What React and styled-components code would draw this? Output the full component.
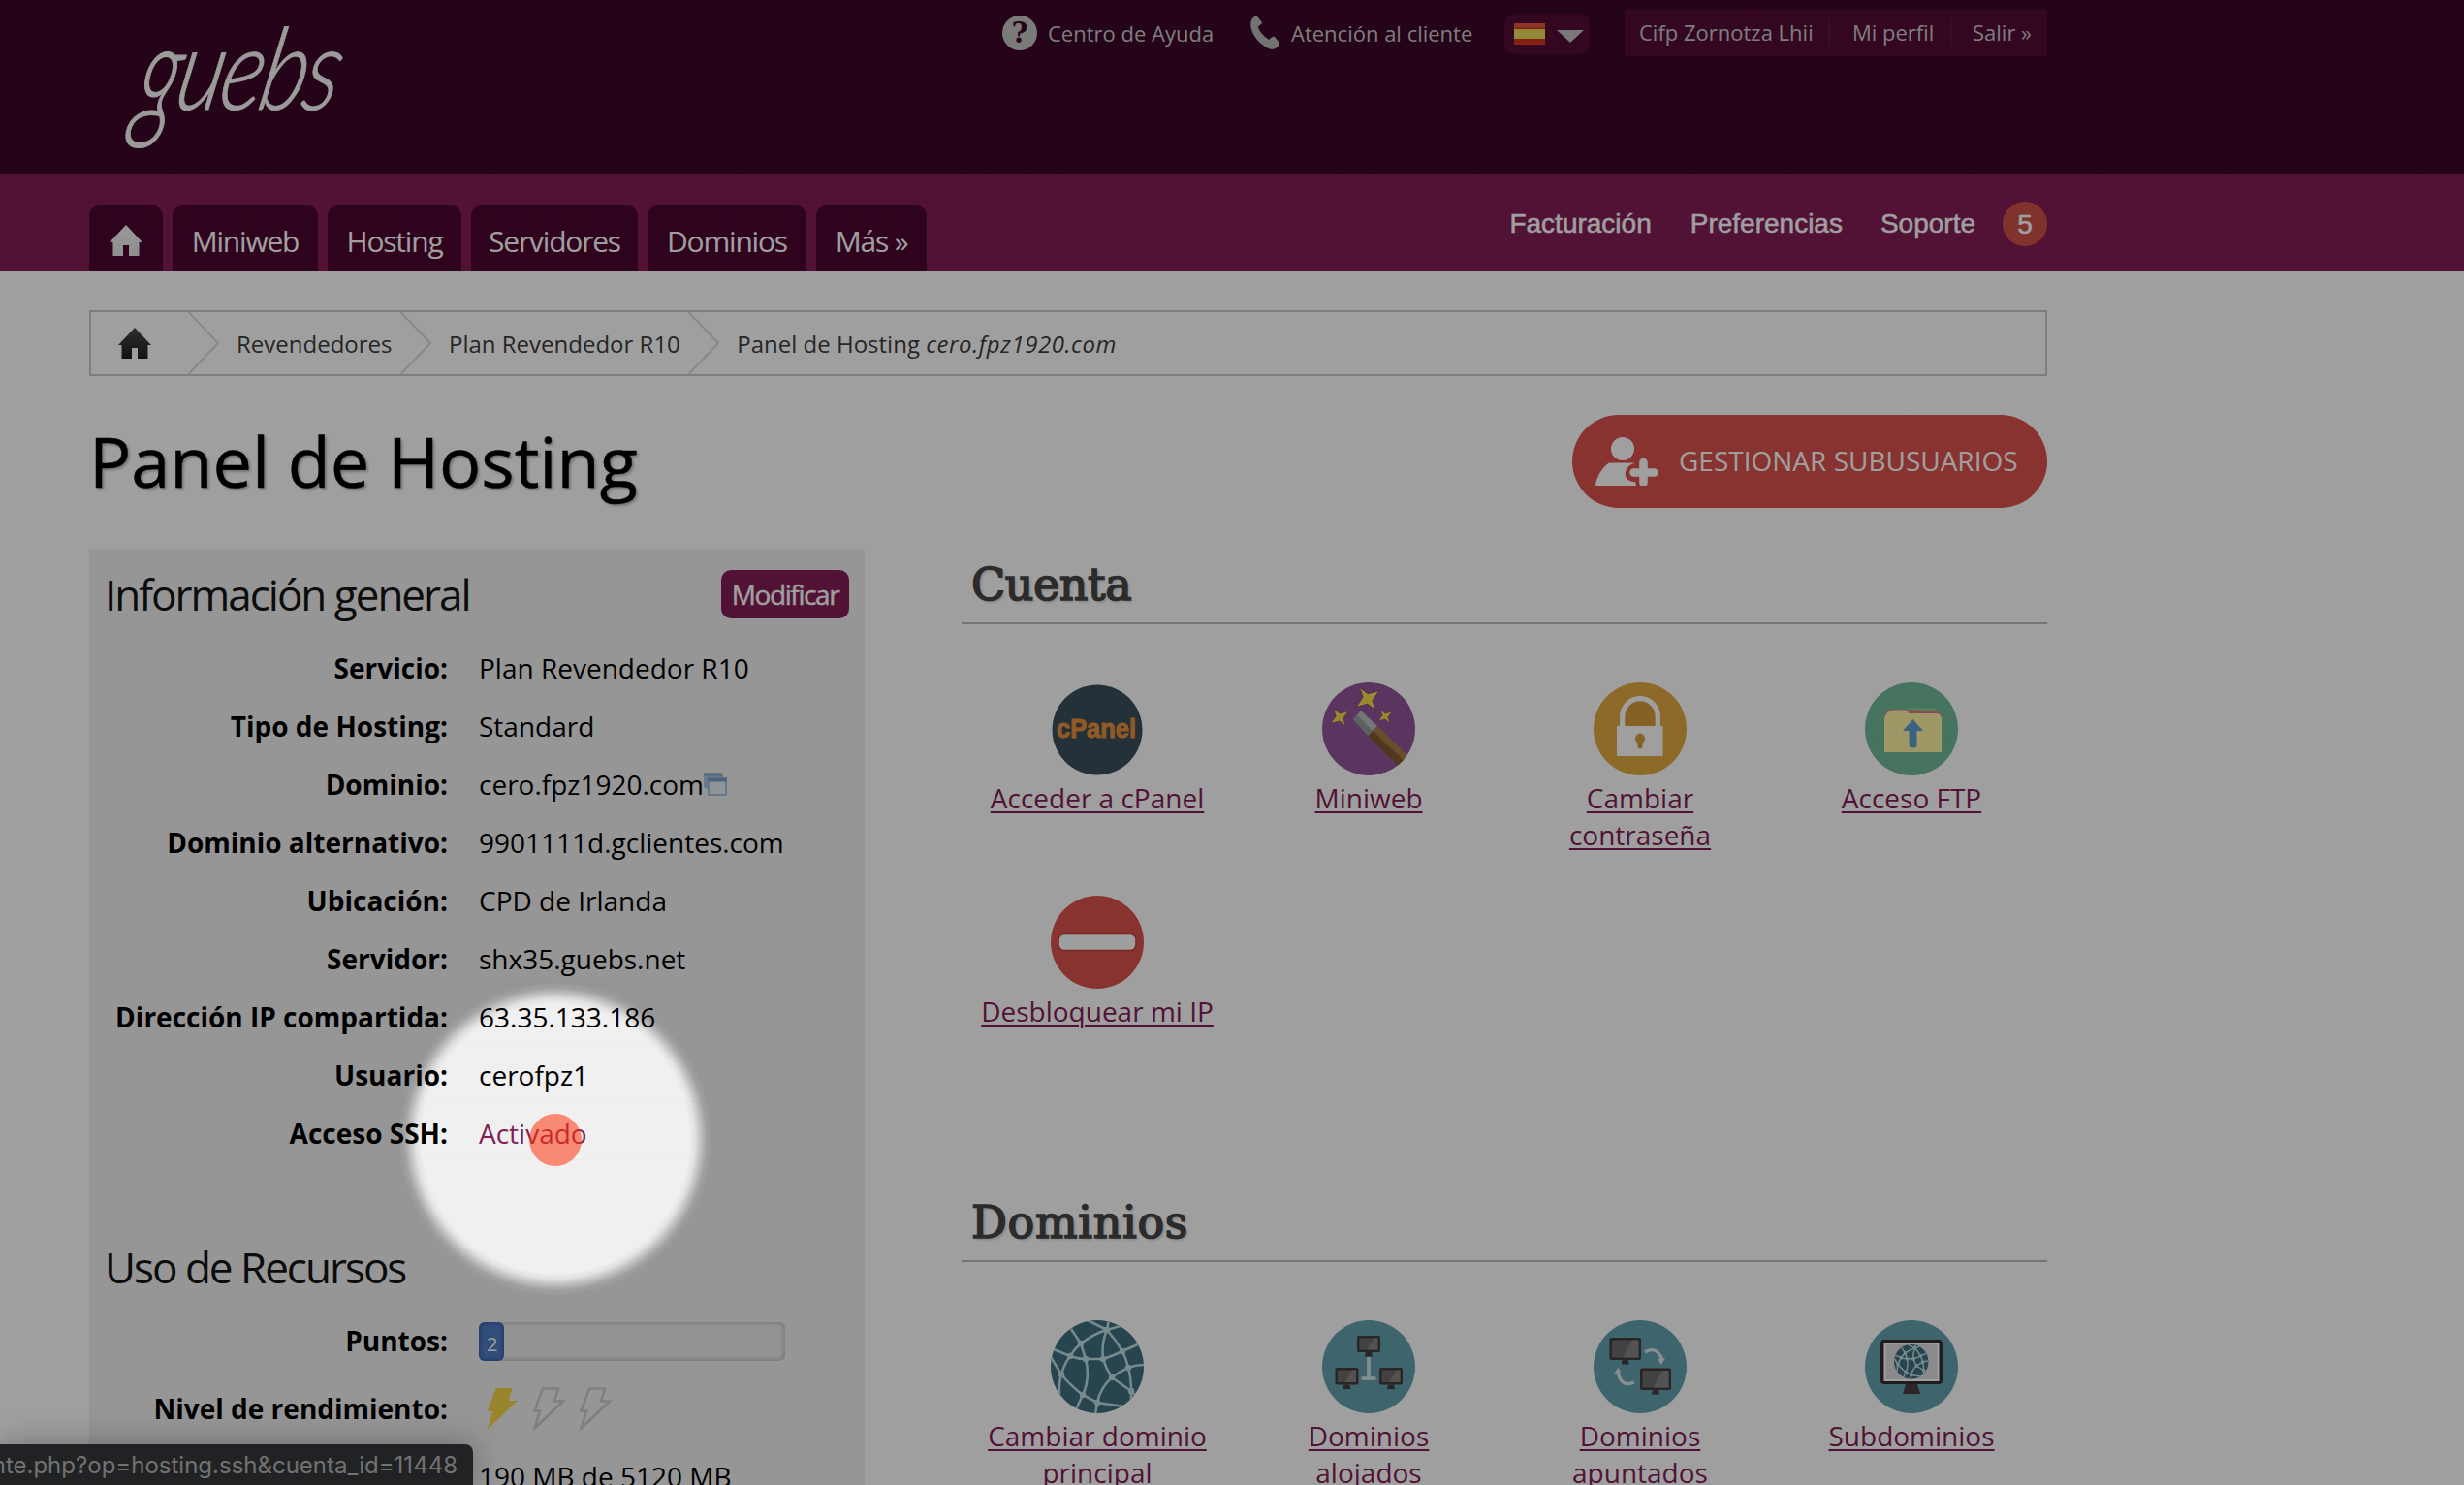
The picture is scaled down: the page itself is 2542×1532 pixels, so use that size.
import React from "react";
import styled, { createGlobalStyle } from "styled-components";

const plum = "#831d56";
const sans = '"Open Sans", "Noto Sans", sans-serif';

const GlobalStyle = createGlobalStyle`
  * { box-sizing: border-box; }
  html, body { margin: 0; padding: 0; background: #fff; overflow: hidden; }
  body { font-family: ${sans}; font-size: 28px; color: #000; }
`;

const Page = styled.div`
  position: relative;
  width: 2542px;
  height: 1532px;
  overflow: hidden;
  background: #fff;
`;

const Container = styled.div`
  width: 2020px;
  margin-left: 92px;
`;

/* ---------- header ---------- */

const Header = styled.header`
  height: 180px;
  background: #3b0526;
`;

const HeaderRow = styled(Container)`
  display: flex;
  justify-content: space-between;
  align-items: flex-start;
`;

const Logo = styled.div`
  margin: 24px 0 0 46px;
  font-family: Lato, sans-serif;
  font-weight: 300;
  font-style: italic;
  font-size: 98px;
  line-height: 100px;
  letter-spacing: -3px;
  color: #f8f8f8;
  -webkit-text-stroke: 0.8px #f8f8f8;
  transform: skewX(-12deg) scale(0.95, 1.2);
  transform-origin: 0 85px;
`;

const LogoTail = styled.span`
  display: inline-block;
  transform: scaleY(1.22);
  transform-origin: 0 39px;
`;

const TopBar = styled.div`
  display: flex;
  align-items: center;
  height: 48px;
  margin-top: 10px;
  font-size: 22px;
  color: #c9c9c9;
`;

const TopLink = styled.a`
  display: flex;
  align-items: center;
  gap: ${(p) => p.$gap}px;
  width: ${(p) => p.$w}px;
  white-space: nowrap;
`;

const TopText = styled.span`
  padding-bottom: 1px;
`;

const LangPicker = styled.div`
  display: flex;
  align-items: center;
  gap: 12px;
  width: 88px;
  height: 42px;
  margin: 2px 36px 0 0;
  padding-left: 10px;
  border-radius: 10px;
  background: #540b34;
`;

const Flag = styled.div`
  width: 32px;
  height: 22px;
  background: linear-gradient(#e05540 0 15%, #c8311c 26%, #f2d64b 27%, #e8e060 50%, #f2d64b 73%, #c8311c 74%, #e03a20 100%);
`;

const Caret = styled.div`
  border: solid transparent;
  border-width: 13px 14px 0;
  border-top-color: #c0c0c0;
  margin-top: 5px;
`;

const UserBox = styled.div`
  display: flex;
  align-items: center;
  height: 48px;
  background: #540b34;
`;

const UserItem = styled.a`
  width: ${(p) => p.$w}px;
  padding: 0 0 1px ${(p) => p.$pad}px;
  line-height: 29px;
  white-space: nowrap;
  border-right: ${(p) => (p.$last ? "0" : "2px solid #661040")};
`;

/* ---------- navigation ---------- */

const NavBar = styled.nav`
  height: 100px;
  background: ${plum};
`;

const NavRow = styled(Container)`
  display: flex;
  justify-content: space-between;
  height: 100px;
`;

const Tabs = styled.div`
  display: flex;
  align-items: flex-end;
  gap: 10px;
`;

const Tab = styled.a`
  display: flex;
  align-items: center;
  justify-content: center;
  width: ${(p) => p.$w}px;
  height: 68px;
  padding: ${(p) => p.$pt || 5}px 0 0;
  border-radius: 11px 11px 0 0;
  background: #4c052e;
  color: #fff;
  font-size: 30px;
  letter-spacing: -1.2px;
  white-space: nowrap;
`;

const SideLinks = styled.div`
  display: flex;
  align-items: center;
  height: 46px;
  margin-top: 28px;
  color: #fff;
  font-family: "Liberation Sans", Arial, sans-serif;
  font-size: 28px;
  -webkit-text-stroke: 0.5px #fff;
`;

const SideLink = styled.a`
  margin-right: ${(p) => p.$gap}px;
`;

const Badge = styled.span`
  width: 46px;
  height: 46px;
  border-radius: 50%;
  background: #cd5248;
  text-align: center;
  line-height: 47px;
`;

/* ---------- breadcrumb and title ---------- */

const Breadcrumb = styled.div`
  display: flex;
  align-items: center;
  height: 68px;
  margin-top: 40px;
  padding-left: 28px;
  border: 2px solid #cacaca;
  font-size: 24px;
  color: #3c3c3c;
`;

const Crumb = styled.span`
  margin: 1px 8.5px 0 18px;
  white-space: nowrap;

  em { letter-spacing: 0.55px; }
`;

const HomeCrumb = styled.span`
  display: flex;
  margin-right: 38px;
`;

const TitleRow = styled.div`
  display: flex;
  align-items: center;
  justify-content: space-between;
  height: 96px;
  margin-top: 40px;
`;

const Title = styled.h1`
  margin: 0;
  font-size: 72px;
  font-weight: 400;
  line-height: 94px;
  padding-bottom: 2px;
  text-shadow: 2px 2px 3px rgba(0, 0, 0, 0.3);
  -webkit-text-stroke: 0.5px #000;
`;

const SubusersButton = styled.button`
  display: flex;
  align-items: center;
  gap: 22px;
  width: 490px;
  height: 96px;
  padding: 0 0 0 24px;
  border: 0;
  border-radius: 48px;
  background: #db524e;
  color: #fff;
  font: 28px ${sans};
  white-space: nowrap;
`;

const ButtonText = styled.span`
  padding-bottom: 2px;
`;

/* ---------- columns ---------- */

const Columns = styled.div`
  display: grid;
  grid-template-columns: 800px 1120px;
  column-gap: 100px;
  margin-top: 42px;
`;

const InfoPanel = styled.section`
  height: 1000px;
  background: #f0f0f0;
`;

const PanelHead = styled.div`
  display: flex;
  align-items: center;
  justify-content: space-between;
  height: ${(p) => p.$h}px;
  margin-top: ${(p) => p.$mt || 0}px;
  padding: ${(p) => p.$pt || 0}px 16px 0;
`;

const PanelTitle = styled.h2`
  margin: 0;
  font-size: 44px;
  font-weight: 400;
  letter-spacing: -2px;
  color: #131313;
`;

const EditButton = styled.button`
  width: 132px;
  height: 50px;
  padding: 0;
  border: 0;
  border-radius: 10px;
  background: ${plum};
  color: #fff;
  font: 28px/50px ${sans};
  letter-spacing: -1.4px;
  -webkit-text-stroke: 0.4px #fff;
`;

const Row = styled.div`
  display: grid;
  grid-template-columns: 370px 1fr;
  column-gap: 32px;
  align-items: center;
  height: ${(p) => p.$h || 60}px;
  padding-top: ${(p) => p.$pt || 0}px;
  border-bottom: 1px solid rgba(0, 0, 0, 0.015);
`;

const Label = styled.span`
  text-align: right;
  font-weight: 700;
  white-space: nowrap;
`;

const Value = styled.span`
  display: flex;
  align-items: center;
  white-space: nowrap;
  color: ${(p) => (p.$link ? plum : "#000")};
`;

const Meter = styled.div`
  width: 316px;
  height: 40px;
  margin-top: 3px;
  border-radius: 6px;
  background: #ededed;
  box-shadow: inset 0 0 6px rgba(0, 0, 0, 0.28);
`;

const MeterFill = styled.div`
  height: 40px;
  border-radius: 6px;
  background: #4f7bc4;
  box-shadow: inset 0 0 5px rgba(10, 30, 90, 0.5);
  color: #fff;
  font-size: 20px;
  line-height: 45px;
  padding-left: 8px;
`;

const Bolts = styled.div`
  display: flex;
  gap: 15px;
  margin: 2px 0 0 8px;
`;

const Section = styled.section`
  margin-bottom: 80px;
`;

const SectionTitle = styled.h2`
  height: 78px;
  margin: 0;
  padding-left: 10px;
  border-bottom: 2px solid #bbb;
  font-family: "DejaVu Serif", serif;
  font-size: 46px;
  font-weight: 400;
  line-height: 75px;
  letter-spacing: ${(p) => p.$spacing}px;
  color: #454545;
  -webkit-text-stroke: 1.7px #454545;
  text-shadow: 2px 2px 3px rgba(0, 0, 0, 0.2);
`;

const Grid = styled.div`
  display: grid;
  grid-template-columns: repeat(4, 280px);
  grid-auto-rows: 220px;
  padding-top: 60px;
`;

const Tile = styled.a`
  display: flex;
  flex-direction: column;
  align-items: center;
  gap: 4px;
  padding: 0 ${(p) => (p.$wide ? 10 : 24)}px;
  color: ${plum};
  font-size: 28px;
  line-height: 38px;
  text-align: center;
  text-decoration: underline;
  text-decoration-thickness: 2px;
  text-underline-offset: 3px;
`;

/* ---------- floating layers ---------- */

const StatusBar = styled.div`
  position: absolute;
  left: 0;
  bottom: 0;
  display: flex;
  justify-content: flex-end;
  width: 488px;
  height: 42px;
  padding-right: 16px;
  overflow: hidden;
  border-top-right-radius: 8px;
  background: #35363a;
  color: #b6b6b6;
  font-family: Inter, Roboto, sans-serif;
  font-size: 24px;
  line-height: 43px;
  white-space: nowrap;
`;

const StatusShadow = styled.div`
  position: absolute;
  left: 0;
  bottom: 0;
  width: 488px;
  height: 42px;
  border-top-right-radius: 8px;
  box-shadow: 0 0 34px rgba(0, 0, 0, 0.3);
`;

const Spotlight = styled.div`
  position: absolute;
  inset: 0;
  pointer-events: none;
  background: radial-gradient(circle at 573px 1175px, transparent 138px, rgba(0, 0, 0, 0.06) 144px, rgba(0, 0, 0, 0.2) 150px, rgba(0, 0, 0, 0.33) 156px, rgba(0, 0, 0, 0.375) 162px);
`;

const Pointer = styled.div`
  position: absolute;
  left: 546px;
  top: 1149px;
  width: 54px;
  height: 54px;
  border-radius: 50%;
  background: rgba(255, 53, 12, 0.55);
`;

/* ---------- drawings ---------- */

const HomeIcon = ({ id, from, to }) => (
  <svg width="34" height="32" viewBox="0 0 34 32">
    <defs>
      <linearGradient id={id} x1="0" y1="0" x2="0" y2="1">
        <stop offset="0" stopColor={from} />
        <stop offset="1" stopColor={to} />
      </linearGradient>
    </defs>
    <path d="M17 0 34 18H30.5V32H20V21H14V32H3.5V18H0Z" fill={`url(#${id})`} />
  </svg>
);

const HelpIcon = () => (
  <svg width="36" height="36" viewBox="0 0 36 36">
    <circle cx="18" cy="18" r="18" fill="#c4c4c4" />
    <text x="18" y="28" textAnchor="middle" fontFamily="DejaVu Serif, serif" fontWeight="700" fontSize="29" fill="#3b0526">?</text>
  </svg>
);

const PhoneIcon = () => (
  <svg width="33" height="36" viewBox="0 0 33 36">
    <path d="M2 5C3 2 6 0 8 1L13 7C13 9 10 10 9 12C10 17 16 22 20 25C22 23 24 21 26 22L31 28C32 31 27 35 23 35C12 32 -2 17 2 5Z" fill="#b8b8b8" />
  </svg>
);

const Chevron = () => (
  <svg width="32" height="64" viewBox="0 0 32 64">
    <path d="M0.5 0 31 32 0.5 64" fill="none" stroke="#dadada" strokeWidth="2" />
  </svg>
);

const UserPlus = () => (
  <svg width="64" height="50" viewBox="0 0 64 50">
    <circle cx="28" cy="12" r="12" fill="#fff" />
    <path d="M0 50C1 41 7 31 14 26.5H41C33 29 30 34 31 40C32 44 36 46 41 46L42 50Z" fill="#fff" />
    <path d="M49.5 26V47M39.5 36.5H60.5" stroke="#fff" strokeWidth="8.6" strokeLinecap="round" />
  </svg>
);

const WindowsIcon = () => (
  <svg width="24" height="24" viewBox="0 0 24 24">
    <path d="M0 0H18L20 4V6H5V18L0 15Z" fill="#a9c1df" />
    <path d="M0 0H18L20 4H0Z" fill="#93aed4" />
    <rect x="5" y="6" width="18" height="17" fill="#e6edf5" stroke="#a6bedc" strokeWidth="2" />
    <rect x="4" y="5.5" width="20" height="4" fill="#7f9dca" />
  </svg>
);

const Bolt = ({ on }) => (
  <svg width="33" height="45" viewBox="0 0 33 45">
    <path
      d="M10 1.5H26L22 14.5H31L1.5 42.5 7 24.5H1.5Z"
      fill={on ? "#f5d547" : "none"}
      stroke={on ? "#f5d547" : "#cbcbcb"}
      strokeWidth={on ? 1 : 2.6}
    />
  </svg>
);

const Disc = ({ fill, children }) => (
  <svg width="96" height="96" viewBox="0 0 96 96">
    <circle cx="48" cy="48" r="48" fill={fill} />
    {children}
  </svg>
);

const CPanelIcon = () => (
  <svg width="96" height="96" viewBox="0 0 96 96">
    <circle cx="48" cy="49" r="46.5" fill="#3a4e5b" />
    <text x="6" y="57" textLength="82" lengthAdjust="spacingAndGlyphs" fontFamily="Liberation Sans, Arial, sans-serif" fontWeight="700" fontSize="28" fill="#e8913c" stroke="#e8913c" strokeWidth="1">cPanel</text>
  </svg>
);

const Sparkle = ({ x, y, s }) => (
  <path
    transform={`translate(${x} ${y}) rotate(-35) scale(${s})`}
    d="M0-14 3-4 14 0 3 4 0 14-3 4-14 0-3-4Z"
    fill="#f3dc50"
    stroke="#7c3f78"
    strokeWidth="0.8"
  />
);

const WandIcon = () => (
  <Disc fill="#905598">
    <Sparkle x={47} y={17} s={1.05} />
    <Sparkle x={18} y={36} s={0.8} />
    <Sparkle x={65} y={35} s={0.6} />
    <path d="M40 29 57 45 47.5 55 32 38Z" fill="#b9bfbc" />
    <path d="M36 33.5 52 50 47.5 55 32 38Z" fill="#949b98" />
    <path d="M57 45 87.5 74.5Q84 81 78 85.5L47.5 55Z" fill="#a67c44" />
    <path d="M52.5 50 83.5 80 78 85.5 47.5 55Z" fill="#7d5a30" />
  </Disc>
);

const LockIcon = () => (
  <Disc fill="#e0a93f">
    <path d="M29.7 46V35A18.3 18.3 0 0 1 66.3 35V46" fill="#d59d38" stroke="#fff" strokeWidth="5.2" />
    <rect x="24" y="45" width="47.5" height="31" fill="#fff" />
    <path d="M48 52.5A5.5 5.5 0 0 1 50.5 62.5V66A2.5 2.5 0 0 1 45.5 66V62.5A5.5 5.5 0 0 1 48 52.5Z" fill="#d39d3b" />
  </Disc>
);

const FtpIcon = () => (
  <Disc fill="#6fb998">
    <path d="M44 26H72L78 34H44Z" fill="#8ecb90" />
    <path d="M20 35Q20 29 26 28H44L58 29H73Q79 31 79 36Z" fill="#e2758c" />
    <path d="M20 37Q22 29 29 28.5H42Q45 28.5 45 32H74Q79 33 79 38V72H20Z" fill="#fbf3a2" />
    <path d="M49.5 38 60 50H53.5V65Q53.5 67.5 49.5 67.5T45.5 65V50H39Z" fill="#5c9fca" />
  </Disc>
);

const NoEntryIcon = () => (
  <Disc fill="#db524e">
    <rect x="8" y="39.5" width="80" height="17" rx="6" fill="#fbfdfd" stroke="#c7413c" strokeWidth="1.6" />
  </Disc>
);

const globeNodes = [[58, 10], [31, 24], [20, 37], [36, 40], [54, 40], [74, 32], [80, 49], [63, 59], [11, 56], [33, 77], [48, 85], [83, 73]];

const GlobeMesh = ({ id, w }) => (
  <g>
    <defs>
      <clipPath id={id}>
        <circle cx="48" cy="48" r="48" />
      </clipPath>
    </defs>
    <circle cx="48" cy="48" r="48" fill="#3f6e7e" />
    <g clipPath={`url(#${id})`} fill="none" stroke="#bcdde2" strokeWidth={w}>
      <path d="M21 9 31 24Q46 13 58 10M38 0 58 10 60-1M58 10 75 5" />
      <path d="M31 24Q24 30 20 37 14 45 11 56M31 24 36 40M3 30 20 37Q28 40 36 40H54Q64 37 74 32L92 24" />
      <path d="M58 10Q52 24 54 40M58 10Q67 20 74 32 78 40 80 49 83 60 83 73V88M54 40Q57 50 63 59M63 59Q71 53 80 49 88 46 97 46M63 59 83 73L90 80" />
      <path d="M63 59Q51 70 48 85M36 40Q41 60 33 77M0 38 11 56Q21 68 33 77L48 85 76 89M11 56Q8 65 9 76M33 77 26 92M48 85 46 97" />
    </g>
    <g fill="#bcdde2">
      {globeNodes.map(([x, y]) => (
        <circle key={`${x}-${y}`} cx={x} cy={y} r={w * 1.25} />
      ))}
    </g>
  </g>
);

const GlobeIcon = () => (
  <svg width="96" height="96" viewBox="0 0 96 96">
    <GlobeMesh id="globeBig" w={2.6} />
  </svg>
);

const Monitor = ({ x, y, w, h }) => (
  <g transform={`translate(${x} ${y})`}>
    <path d={`M${w / 2 - 3} ${h}H${w / 2 + 3}L${w / 2 + 4} ${h + 4.5}H${w / 2 - 4}Z`} fill="#43393b" />
    <rect width={w} height={h} rx="2" fill="#43393b" />
    <rect x="2.5" y="2.5" width={w - 5} height={h - 5} fill="#6a6a6a" />
    <path d={`M${w * 0.72} 2.5H${w - 2.5}V${h - 2.5}H${w * 0.42}Z`} fill="#838383" />
  </g>
);

const NetworkIcon = () => (
  <Disc fill="#63a0ae">
    <path d="M48 38V60M40.5 60H55.5" stroke="#d6e4e8" strokeWidth="3.6" />
    <Monitor x={36} y={16} w={24} h={17} />
    <Monitor x={13.5} y={49} w={24} h={17.5} />
    <Monitor x={59} y={49} w={24} h={17.5} />
  </Disc>
);

const PointedIcon = () => (
  <Disc fill="#63a0ae">
    <Monitor x={16.5} y={18} w={32.5} h={23} />
    <Monitor x={48} y={49.5} w={32} h={22.5} />
    <g fill="none" stroke="#d6e4e8" strokeWidth="3.4">
      <path d="M53 33Q65 26 70.5 40" />
      <path d="M42 64Q29 70 25 54" />
    </g>
    <path d="M66 40 74 39 70 46ZM21 55 28.5 54 25.5 49Z" fill="#d6e4e8" />
  </Disc>
);

const SubdomainIcon = () => (
  <Disc fill="#63a0ae">
    <path d="M42 66H54L57 76H39Z" fill="#463c3e" />
    <rect x="16" y="20" width="64" height="46" rx="4" fill="#332c2f" />
    <rect x="19.5" y="23" width="57" height="40" fill="#fff" />
    <rect x="21.5" y="25" width="53" height="36" fill="#dedede" />
    <g transform="translate(30 25) scale(0.37)">
      <GlobeMesh id="globeSmall" w={4} />
    </g>
  </Disc>
);

/* ---------- data ---------- */

const tabs = [
  ["Miniweb", 150],
  ["Hosting", 138],
  ["Servidores", 172],
  ["Dominios", 164],
  ["Más »", 114],
];

const info = [
  { label: "Servicio:", value: "Plan Revendedor R10" },
  { label: "Tipo de Hosting:", value: "Standard" },
  { label: "Dominio:", value: "cero.fpz1920.com", icon: true },
  { label: "Dominio alternativo:", value: "9901111d.gclientes.com" },
  { label: "Ubicación:", value: "CPD de Irlanda" },
  { label: "Servidor:", value: "shx35.guebs.net" },
  { label: "Dirección IP compartida:", value: "63.35.133.186" },
  { label: "Usuario:", value: "cerofpz1" },
  { label: "Acceso SSH:", value: "Activado", link: true },
];

const sections = [
  {
    title: "Cuenta",
    spacing: -0.4,
    tiles: [
      { name: "Acceder a cPanel", Icon: CPanelIcon },
      { name: "Miniweb", Icon: WandIcon },
      { name: "Cambiar contraseña", Icon: LockIcon },
      { name: "Acceso FTP", Icon: FtpIcon },
      { name: "Desbloquear mi IP", Icon: NoEntryIcon, wide: true },
    ],
  },
  {
    title: "Dominios",
    spacing: 0.7,
    tiles: [
      { name: "Cambiar dominio principal", Icon: GlobeIcon },
      { name: "Dominios alojados", Icon: NetworkIcon },
      { name: "Dominios apuntados", Icon: PointedIcon },
      { name: "Subdominios", Icon: SubdomainIcon },
    ],
  },
];

export default function App() {
  return (
    <Page>
      <GlobalStyle />
      <Header>
        <HeaderRow>
          <Logo><LogoTail>g</LogoTail>uebs</Logo>
          <TopBar>
            <TopLink $w={255} $gap={11}><HelpIcon /><TopText>Centro de Ayuda</TopText></TopLink>
            <TopLink $w={263} $gap={10}><PhoneIcon /><TopText>Atención al cliente</TopText></TopLink>
            <LangPicker><Flag /><Caret /></LangPicker>
            <UserBox>
              <UserItem $w={212} $pad={15}>Cifp Zornotza Lhii</UserItem>
              <UserItem $w={126} $pad={23}>Mi perfil</UserItem>
              <UserItem $w={98} $pad={21} $last>Salir »</UserItem>
            </UserBox>
          </TopBar>
        </HeaderRow>
      </Header>
      <NavBar>
        <NavRow>
          <Tabs>
            <Tab $w={76} $pt={4}><HomeIcon id="homeNav" from="#f4f4f4" to="#e4e4e4" /></Tab>
            {tabs.map(([name, w]) => (
              <Tab key={name} $w={w}>{name}</Tab>
            ))}
          </Tabs>
          <SideLinks>
            <SideLink $gap={40}>Facturación</SideLink>
            <SideLink $gap={39}>Preferencias</SideLink>
            <SideLink $gap={28}>Soporte</SideLink>
            <Badge>5</Badge>
          </SideLinks>
        </NavRow>
      </NavBar>
      <Container>
        <Breadcrumb>
          <HomeCrumb><HomeIcon id="homeCrumb" from="#4a4a4a" to="#1c1c1c" /></HomeCrumb>
          <Chevron />
          <Crumb>Revendedores</Crumb>
          <Chevron />
          <Crumb>Plan Revendedor R10</Crumb>
          <Chevron />
          <Crumb>Panel de Hosting <em>cero.fpz1920.com</em></Crumb>
        </Breadcrumb>
        <TitleRow>
          <Title>Panel de Hosting</Title>
          <SubusersButton><UserPlus /><ButtonText>GESTIONAR SUBUSUARIOS</ButtonText></SubusersButton>
        </TitleRow>
        <Columns>
          <InfoPanel>
            <PanelHead $h={91} $pt={3}>
              <PanelTitle>Información general</PanelTitle>
              <EditButton>Modificar</EditButton>
            </PanelHead>
            {info.map((r) => (
              <Row key={r.label} $pt={5}>
                <Label>{r.label}</Label>
                <Value $link={r.link}>{r.value}{r.icon && <WindowsIcon />}</Value>
              </Row>
            ))}
            <PanelHead $h={93} $mt={63}>
              <PanelTitle>Uso de Recursos</PanelTitle>
            </PanelHead>
            <Row>
              <Label>Puntos:</Label>
              <Meter><MeterFill style={{ width: 26 }}>2</MeterFill></Meter>
            </Row>
            <Row $h={80}>
              <Label>Nivel de rendimiento:</Label>
              <Bolts><Bolt on /><Bolt /><Bolt /></Bolts>
            </Row>
            <Row>
              <span />
              <Value>190 MB de 5120 MB</Value>
            </Row>
          </InfoPanel>
          <div>
            {sections.map((s) => (
              <Section key={s.title}>
                <SectionTitle $spacing={s.spacing}>{s.title}</SectionTitle>
                <Grid>
                  {s.tiles.map(({ name, Icon, wide }) => (
                    <Tile key={name} $wide={wide}><Icon /><span>{name}</span></Tile>
                  ))}
                </Grid>
              </Section>
            ))}
          </div>
        </Columns>
      </Container>
      <StatusShadow />
      <StatusBar>nte.php?op=hosting.ssh&amp;cuenta_id=11448</StatusBar>
      <Spotlight />
      <Pointer />
    </Page>
  );
}
